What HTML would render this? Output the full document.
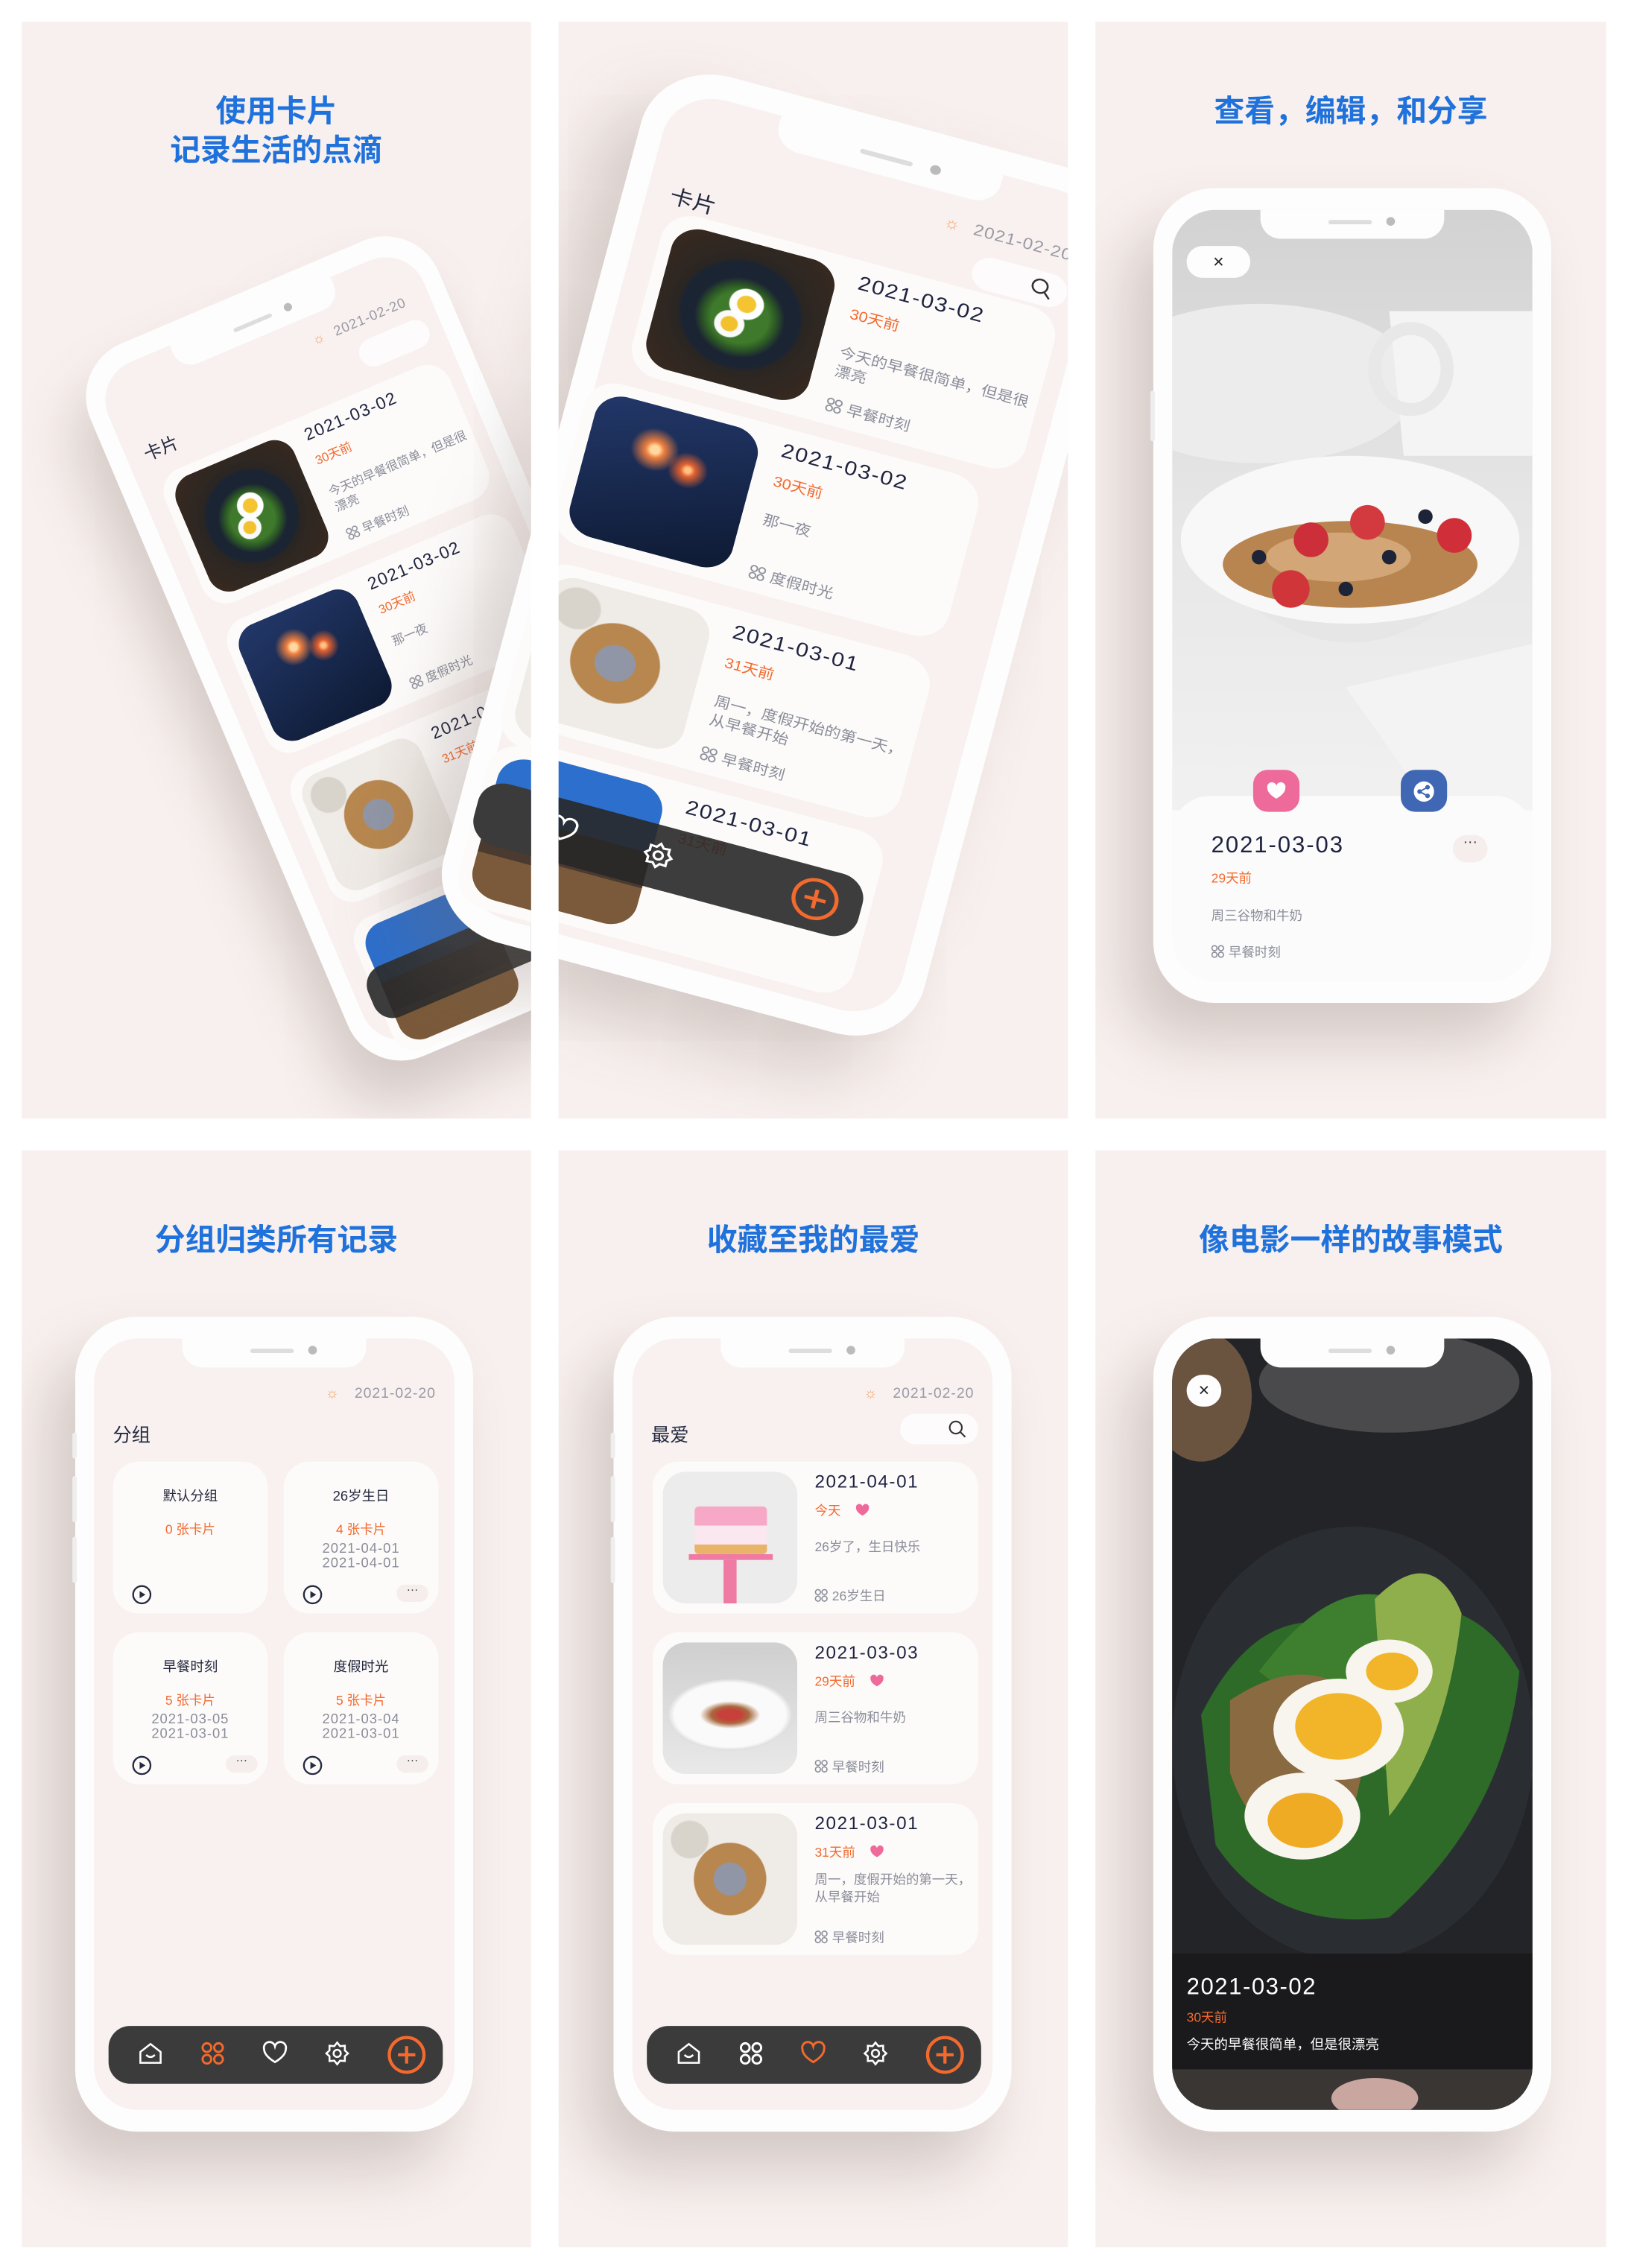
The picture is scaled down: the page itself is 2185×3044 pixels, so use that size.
<!DOCTYPE html>
<html><head><meta charset="utf-8">
<style>
*{margin:0;padding:0;box-sizing:border-box}
html,body{width:2185px;height:3044px;background:#fff;overflow:hidden}
body{font-family:"Liberation Sans","Noto Sans CJK SC",sans-serif}
#root{position:absolute;left:0;top:0;width:1125px;height:1567px;transform:scale(1.9422);transform-origin:0 0}
.panel{position:absolute;background:#f8f0ee;overflow:hidden;width:352px;height:758px}
.title{position:absolute;left:0;width:100%;text-align:center;color:#1f72dc;font-weight:bold;font-size:21px;line-height:27px;font-family:"Noto Sans CJK SC",sans-serif}
.phone{position:absolute;width:275px;height:563px;background:#fdfdfd;border-radius:42px;box-shadow:-18px 26px 40px rgba(120,100,95,.28)}
.scr{position:absolute;left:13px;top:15px;width:249px;height:533px;border-radius:30px;background:#f8f1ef;overflow:hidden}
.notch{position:absolute;left:74px;top:15px;width:127px;height:20px;background:#fdfdfd;border-radius:0 0 14px 14px;z-index:5}
.notch:before{content:"";position:absolute;left:47px;top:7px;width:30px;height:3px;border-radius:2px;background:#ddd}
.notch:after{content:"";position:absolute;left:87px;top:5px;width:6px;height:6px;border-radius:50%;background:#bbb}
.sbtn{position:absolute;left:-2px;width:3px;background:#eee;border-radius:2px}
.abs{position:absolute;white-space:nowrap}
.date{font-size:10px;color:#9a9aa6;letter-spacing:.5px}
.ttl{font-size:13px;color:#252a40}
.search{position:absolute;width:54px;height:21px;border-radius:11px;background:#fdfbfb}
.card{position:absolute;left:27px;width:225px;height:105px;border-radius:18px;background:#fdfbfa}
.cimg{position:absolute;left:7px;top:7px;width:93px;height:91px;border-radius:16px;overflow:hidden}
.cd{position:absolute;left:112px;top:7px;font-size:12.5px;color:#1e2340;letter-spacing:.8px}
.cs{position:absolute;left:112px;top:27px;font-size:9px;color:#f26a2e}
.cx{position:absolute;left:112px;top:53px;font-size:9px;color:#8a8d99;line-height:12px;width:108px;white-space:normal}
.ct{position:absolute;left:112px;top:86px;font-size:9px;color:#8a8d99}
.g{display:inline-block;width:9px;height:9px;margin-right:3px;vertical-align:-1px;background:radial-gradient(circle,transparent 1.3px,#8a8d99 1.4px 2.1px,transparent 2.2px) 0 0/4.5px 4.5px}
.hr{display:inline-block;width:10px;height:9px;margin-left:10px;vertical-align:-1px}
.nav{position:absolute;left:23px;top:490px;width:231px;height:40px;border-radius:15px;background:#3b3b3b}
.nav svg{position:absolute;top:10px}
.gcard{position:absolute;width:107px;height:105px;border-radius:18px;background:#fdfbfa;text-align:center}
.gcard .n{position:absolute;left:0;width:100%;top:16px;font-size:9.5px;color:#252a40}
.gcard .c{position:absolute;left:0;width:100%;top:40px;font-size:9px;color:#f26a2e}
.gcard .d{position:absolute;left:0;width:100%;top:56px;font-size:9.5px;color:#8a8d99;line-height:10px;letter-spacing:.5px}
.gcard .p{position:absolute;left:13px;top:85px}
.gcard .m{position:absolute;left:78px;top:85px;width:22px;height:12px;border-radius:6px;background:#f6eeec;font-size:8px;line-height:7px;color:#333}
.img-plate{background:radial-gradient(circle at 52% 42%,#f5c531 0 7%,#fff 8% 13%,transparent 14%),radial-gradient(circle at 45% 58%,#f2c12e 0 6%,#fafafa 7% 11%,transparent 12%),radial-gradient(circle at 50% 52%,#3f7a2c 0 24%,#2d5a25 30%,transparent 38%),radial-gradient(circle at 50% 50%,#1b2433 0 50%,#2b2622 55%,#3a2a20 100%)}
.img-spark{background:radial-gradient(circle at 40% 30%,#ffd8a0 0 3%,#f08040 6%,transparent 16%),radial-gradient(circle at 62% 38%,#ffc080 0 2%,#e06030 5%,transparent 14%),linear-gradient(160deg,#23386a,#0e1a33)}
.img-table{background:radial-gradient(circle at 50% 50%,#9096a6 0 17%,#b8874f 18% 38%,transparent 39%),radial-gradient(circle at 20% 20%,#d8d4cc 0 12%,transparent 13%),#efebe6}
.img-blue{background:linear-gradient(#2d6fcc 0 45%,#4a3a30 45% 70%,#7a5a3a 70%)}
.img-bowl{background:radial-gradient(ellipse 28% 13% at 50% 55%,#c8403a 0 30%,#a86a40 50%,transparent 80%),radial-gradient(ellipse 46% 27% at 50% 55%,#fafafa 0 90%,#ddd 100%,transparent 101%),linear-gradient(#cfcfcf,#e9e9e9)}
.img-cake{background:#ececec}
</style></head><body><div id="root">

<!-- ================= PANEL 1 ================= -->
<div class="panel" style="left:15px;top:15px">
  <div class="title" style="top:48px">使用卡片<br>记录生活的点滴</div>
  <div class="phone" style="left:32px;top:238px;transform:rotate(-23deg) scale(.95);transform-origin:0 0">
    <div class="scr">
      <div class="abs" style="left:158px;top:33px;color:#f4a36a;font-size:10px">☼</div>
      <div class="abs date" style="left:175px;top:33px">2021-02-20</div>
      <div class="abs ttl" style="left:13px;top:56px">卡片</div>
      <div class="search" style="left:185px;top:52px"></div>
    </div>
    <div class="notch"></div>
    <div class="card" style="top:100px"><div class="cimg img-plate"></div><div class="cd">2021-03-02</div><div class="cs">30天前</div><div class="cx">今天的早餐很简单，但是很漂亮</div><div class="ct"><span class="g"></span>早餐时刻</div></div>
    <div class="card" style="top:218px"><div class="cimg img-spark"></div><div class="cd">2021-03-02</div><div class="cs">30天前</div><div class="cx">那一夜</div><div class="ct"><span class="g"></span>度假时光</div></div>
    <div class="card" style="top:336px"><div class="cimg img-table"></div><div class="cd">2021-03-01</div><div class="cs">31天前</div></div>
    <div class="card" style="top:454px"><div class="cimg img-blue"></div></div>
    <div class="nav" style="top:490px;background:rgba(45,45,45,.92)"></div>
  </div>
  <div class="phone" style="left:440px;top:25px;transform:rotate(15deg) scale(1.25,1.1);transform-origin:0 0">
    <div class="scr"></div>
    <div class="card" style="top:336px;left:10px"><div class="cimg img-table"></div></div>
    <div class="card" style="top:440px;left:10px"><div class="cimg img-blue"></div></div>
    <div class="nav" style="top:465px;left:10px"></div>
  </div>
</div>

<!-- ================= PANEL 2 ================= -->
<div class="panel" style="left:386px;top:15px">
  <div class="phone" style="left:69px;top:25px;transform:rotate(15deg) scale(1.25,1.1);transform-origin:0 0">
    <div class="scr">
      <div class="abs" style="left:163px;top:33px;color:#f4a36a;font-size:10px">☼</div>
      <div class="abs date" style="left:180px;top:33px">2021-02-20</div>
      <div class="abs ttl" style="left:13px;top:56px">卡片</div>
      <div class="search" style="left:185px;top:52px"><svg style="position:absolute;left:33px;top:4px" width="13" height="13" viewBox="0 0 13 13"><circle cx="5.5" cy="5.5" r="4.2" fill="none" stroke="#333" stroke-width="1.1"/><path d="M8.5 8.5L12 12" stroke="#333" stroke-width="1.1"/></svg></div>
    </div>
    <div class="notch"></div>
    <div class="card" style="top:90px"><div class="cimg img-plate"></div><div class="cd">2021-03-02</div><div class="cs">30天前</div><div class="cx">今天的早餐很简单，但是很漂亮</div><div class="ct"><span class="g"></span>早餐时刻</div></div>
    <div class="card" style="top:204px;left:10px"><div class="cimg img-spark"></div><div class="cd">2021-03-02</div><div class="cs">30天前</div><div class="cx">那一夜</div><div class="ct"><span class="g"></span>度假时光</div></div>
    <div class="card" style="top:322px;left:10px"><div class="cimg img-table"></div><div class="cd">2021-03-01</div><div class="cs">31天前</div><div class="cx">周一，度假开始的第一天，从早餐开始</div><div class="ct"><span class="g"></span>早餐时刻</div></div>
    <div class="card" style="top:436px;left:10px"><div class="cimg img-blue"></div><div class="cd">2021-03-01</div><div class="cs">31天前</div></div>
    <div class="nav" style="top:465px;left:10px;width:220px;background:rgba(40,40,40,.9)">
      <svg style="left:40px" width="18" height="18" viewBox="0 0 18 18" fill="none" stroke="#fff" stroke-width="1.4"><path d="M9 15C4 12 1.5 9 1.5 6A3.7 3.7 0 0 1 9 4A3.7 3.7 0 0 1 16.5 6C16.5 9 14 12 9 15Z"/></svg>
      <svg style="left:95px" width="18" height="18" viewBox="0 0 18 18" fill="none" stroke="#fff" stroke-width="1.4"><circle cx="9" cy="9" r="2.5"/><path d="M9 1.5L11 4L14.3 3.7L14.3 7L16.5 9L14.3 11L14.3 14.3L11 14L9 16.5L7 14L3.7 14.3L3.7 11L1.5 9L3.7 7L3.7 3.7L7 4Z"/></svg>
      <svg style="left:180px;top:6px" width="28" height="28" viewBox="0 0 28 28" fill="none" stroke="#f26a2e" stroke-width="2.2"><circle cx="14" cy="14" r="12"/><path d="M14 8V20M8 14H20"/></svg>
    </div>
  </div>
</div>

<!-- ================= PANEL 3 ================= -->
<div class="panel" style="left:757px;top:15px;width:353px">
  <div class="title" style="top:48px">查看，编辑，和分享</div>
  <div class="phone" style="left:40px;top:115px">
    <div class="sbtn" style="top:140px;height:35px"></div>
    <div class="scr" style="background:#fcfbfb">
      <svg width="249" height="415" viewBox="0 0 249 415" style="position:absolute;left:0;top:0">
        <defs><linearGradient id="bg3" x1="0" y1="0" x2="0" y2="1"><stop offset="0" stop-color="#d2d2d2"/><stop offset=".5" stop-color="#e6e6e6"/><stop offset="1" stop-color="#f1f1f1"/></linearGradient></defs>
        <rect width="249" height="415" fill="url(#bg3)"/>
        <ellipse cx="60" cy="120" rx="110" ry="55" fill="#ececec"/>
        <path d="M150 70H249V170H160Z" fill="#f4f4f4"/>
        <ellipse cx="165" cy="110" rx="25" ry="28" fill="none" stroke="#e8e8e8" stroke-width="9"/>
        <path d="M120 330L249 300V415H180Z" fill="#f3f3f3"/>
        <path d="M8 228Q123 370 238 228" fill="#e6e6e6"/>
        <ellipse cx="123" cy="228" rx="117" ry="58" fill="#f8f8f8"/>
        <ellipse cx="123" cy="245" rx="88" ry="30" fill="#b88550"/>
        <ellipse cx="115" cy="240" rx="50" ry="17" fill="#d2a676"/>
        <circle cx="82" cy="262" r="13" fill="#d0353a"/><circle cx="96" cy="228" r="12" fill="#cc2f3a"/>
        <circle cx="135" cy="216" r="12" fill="#d23a40"/><circle cx="195" cy="225" r="12" fill="#d02f3a"/>
        <circle cx="60" cy="240" r="5" fill="#1e2438"/><circle cx="150" cy="240" r="5" fill="#1e2438"/><circle cx="120" cy="262" r="5" fill="#1e2438"/><circle cx="175" cy="212" r="5" fill="#1e2438"/>
      </svg>
      <div class="abs" style="left:10px;top:25px;width:44px;height:22px;border-radius:11px;background:#fdfdfd;text-align:center;font-size:13px;line-height:21px;color:#222">×</div>
      <div style="position:absolute;left:0;top:405px;width:249px;height:128px;border-radius:26px 26px 0 0;background:#fcfbfb"></div>
      <div class="abs" style="left:56px;top:387px;width:32px;height:29px;border-radius:10px;background:#ee6a9a"><svg style="position:absolute;left:9px;top:8px" width="14" height="13" viewBox="0 0 18 16"><path d="M9 15C4 12 1 9 1 5.5A4 4 0 0 1 9 3.5A4 4 0 0 1 17 5.5C17 9 14 12 9 15Z" fill="#fff"/></svg></div>
      <div class="abs" style="left:158px;top:387px;width:32px;height:29px;border-radius:10px;background:#3f67b3"><svg style="position:absolute;left:8px;top:7px" width="16" height="16" viewBox="0 0 16 16"><circle cx="8" cy="8" r="7" fill="#fff"/><circle cx="5" cy="8" r="1.6" fill="#3f67b3"/><circle cx="10.5" cy="5" r="1.6" fill="#3f67b3"/><circle cx="10.5" cy="11" r="1.6" fill="#3f67b3"/><path d="M5 8L10.5 5M5 8L10.5 11" stroke="#3f67b3" stroke-width="1"/></svg></div>
      <div class="abs" style="left:27px;top:431px;font-size:16px;color:#1e2340;letter-spacing:1px">2021-03-03</div>
      <div class="abs" style="left:27px;top:455px;font-size:9px;color:#f26a2e">29天前</div>
      <div class="abs" style="left:27px;top:481px;font-size:9px;color:#8a8d99">周三谷物和牛奶</div>
      <div class="abs" style="left:27px;top:506px;font-size:9px;color:#8a8d99"><span class="g"></span>早餐时刻</div>
      <div class="abs" style="left:194px;top:432px;width:24px;height:19px;border-radius:10px;background:#f6eeec;text-align:center;font-size:10px;line-height:12px;color:#333">···</div>
    </div>
    <div class="notch"></div>
  </div>
</div>

<!-- ================= PANEL 4 ================= -->
<div class="panel" style="left:15px;top:795px">
  <div class="title" style="top:48px">分组归类所有记录</div>
  <div class="phone" style="left:37px;top:115px">
    <div class="sbtn" style="top:80px;height:18px"></div><div class="sbtn" style="top:110px;height:32px"></div><div class="sbtn" style="top:152px;height:32px"></div>
    <div class="scr">
      <div class="abs" style="left:160px;top:33px;color:#f4a36a;font-size:10px">☼</div>
      <div class="abs date" style="left:180px;top:33px">2021-02-20</div>
      <div class="abs ttl" style="left:13px;top:56px">分组</div>
    </div>
    <div class="notch"></div>
    <div class="gcard" style="left:26px;top:100px"><div class="n">默认分组</div><div class="c">0 张卡片</div><div class="p"><svg width="14" height="14" viewBox="0 0 14 14"><circle cx="7" cy="7" r="6" fill="none" stroke="#252a40" stroke-width="1.2"/><path d="M5.5 4.5L9.5 7L5.5 9.5Z" fill="#252a40"/></svg></div></div>
    <div class="gcard" style="left:144px;top:100px"><div class="n">26岁生日</div><div class="c">4 张卡片</div><div class="d">2021-04-01<br>2021-04-01</div><div class="p"><svg width="14" height="14" viewBox="0 0 14 14"><circle cx="7" cy="7" r="6" fill="none" stroke="#252a40" stroke-width="1.2"/><path d="M5.5 4.5L9.5 7L5.5 9.5Z" fill="#252a40"/></svg></div><div class="m">···</div></div>
    <div class="gcard" style="left:26px;top:218px"><div class="n">早餐时刻</div><div class="c">5 张卡片</div><div class="d">2021-03-05<br>2021-03-01</div><div class="p"><svg width="14" height="14" viewBox="0 0 14 14"><circle cx="7" cy="7" r="6" fill="none" stroke="#252a40" stroke-width="1.2"/><path d="M5.5 4.5L9.5 7L5.5 9.5Z" fill="#252a40"/></svg></div><div class="m">···</div></div>
    <div class="gcard" style="left:144px;top:218px"><div class="n">度假时光</div><div class="c">5 张卡片</div><div class="d">2021-03-04<br>2021-03-01</div><div class="p"><svg width="14" height="14" viewBox="0 0 14 14"><circle cx="7" cy="7" r="6" fill="none" stroke="#252a40" stroke-width="1.2"/><path d="M5.5 4.5L9.5 7L5.5 9.5Z" fill="#252a40"/></svg></div><div class="m">···</div></div>
    <div class="nav">
      <svg style="left:20px" width="18" height="18" viewBox="0 0 18 18" fill="none" stroke="#fff" stroke-width="1.3"><path d="M2 8L9 2.5L16 8V15.5H2Z"/><path d="M6 10Q9 13 12 10"/></svg>
      <svg style="left:63px" width="18" height="18" viewBox="0 0 18 18" fill="none" stroke="#f26a2e" stroke-width="1.5"><circle cx="5" cy="5" r="3"/><circle cx="13" cy="5" r="3"/><circle cx="5" cy="13" r="3"/><circle cx="13" cy="13" r="3"/></svg>
      <svg style="left:106px" width="18" height="18" viewBox="0 0 18 18" fill="none" stroke="#fff" stroke-width="1.4"><path d="M9 15C4 12 1.5 9 1.5 6A3.7 3.7 0 0 1 9 4A3.7 3.7 0 0 1 16.5 6C16.5 9 14 12 9 15Z"/></svg>
      <svg style="left:149px" width="18" height="18" viewBox="0 0 18 18" fill="none" stroke="#fff" stroke-width="1.3"><circle cx="9" cy="9" r="2.5"/><path d="M9 1.5L11 4L14.3 3.7L14.3 7L16.5 9L14.3 11L14.3 14.3L11 14L9 16.5L7 14L3.7 14.3L3.7 11L1.5 9L3.7 7L3.7 3.7L7 4Z"/></svg>
      <svg style="left:192px;top:6px" width="28" height="28" viewBox="0 0 28 28" fill="none" stroke="#f26a2e" stroke-width="2.2"><circle cx="14" cy="14" r="12"/><path d="M14 8V20M8 14H20"/></svg>
    </div>
  </div>
</div>

<!-- ================= PANEL 5 ================= -->
<div class="panel" style="left:386px;top:795px">
  <div class="title" style="top:48px">收藏至我的最爱</div>
  <div class="phone" style="left:38px;top:115px">
    <div class="sbtn" style="top:80px;height:18px"></div><div class="sbtn" style="top:110px;height:32px"></div><div class="sbtn" style="top:152px;height:32px"></div>
    <div class="scr">
      <div class="abs" style="left:160px;top:33px;color:#f4a36a;font-size:10px">☼</div>
      <div class="abs date" style="left:180px;top:33px">2021-02-20</div>
      <div class="abs ttl" style="left:13px;top:56px">最爱</div>
      <div class="search" style="left:185px;top:52px"><svg style="position:absolute;left:33px;top:4px" width="13" height="13" viewBox="0 0 13 13"><circle cx="5.5" cy="5.5" r="4.2" fill="none" stroke="#333" stroke-width="1.1"/><path d="M8.5 8.5L12 12" stroke="#333" stroke-width="1.1"/></svg></div>
    </div>
    <div class="notch"></div>
    <div class="card" style="top:100px"><div class="cimg img-cake"><div style="position:absolute;left:22px;top:24px;width:50px;height:33px;background:linear-gradient(#f6a8c6 0 40%,#fbe7ef 40% 80%,#e9b36a 80%);border-radius:3px"></div><div style="position:absolute;left:18px;top:57px;width:58px;height:4px;background:#ef7aa3"></div><div style="position:absolute;left:42px;top:61px;width:9px;height:30px;background:#ef7aa3"></div></div><div class="cd">2021-04-01</div><div class="cs">今天<svg class="hr" viewBox="0 0 18 16"><path d="M9 15C4 12 1 9 1 5.5A4 4 0 0 1 9 3.5A4 4 0 0 1 17 5.5C17 9 14 12 9 15Z" fill="#ee6a9a"/></svg></div><div class="cx">26岁了，生日快乐</div><div class="ct"><span class="g"></span>26岁生日</div></div>
    <div class="card" style="top:218px"><div class="cimg img-bowl"></div><div class="cd">2021-03-03</div><div class="cs">29天前<svg class="hr" viewBox="0 0 18 16"><path d="M9 15C4 12 1 9 1 5.5A4 4 0 0 1 9 3.5A4 4 0 0 1 17 5.5C17 9 14 12 9 15Z" fill="#ee6a9a"/></svg></div><div class="cx">周三谷物和牛奶</div><div class="ct"><span class="g"></span>早餐时刻</div></div>
    <div class="card" style="top:336px"><div class="cimg img-table"></div><div class="cd">2021-03-01</div><div class="cs">31天前<svg class="hr" viewBox="0 0 18 16"><path d="M9 15C4 12 1 9 1 5.5A4 4 0 0 1 9 3.5A4 4 0 0 1 17 5.5C17 9 14 12 9 15Z" fill="#ee6a9a"/></svg></div><div class="cx" style="top:47px">周一，度假开始的第一天，从早餐开始</div><div class="ct"><span class="g"></span>早餐时刻</div></div>
    <div class="nav">
      <svg style="left:20px" width="18" height="18" viewBox="0 0 18 18" fill="none" stroke="#fff" stroke-width="1.3"><path d="M2 8L9 2.5L16 8V15.5H2Z"/><path d="M6 10Q9 13 12 10"/></svg>
      <svg style="left:63px" width="18" height="18" viewBox="0 0 18 18" fill="none" stroke="#fff" stroke-width="1.5"><circle cx="5" cy="5" r="3"/><circle cx="13" cy="5" r="3"/><circle cx="5" cy="13" r="3"/><circle cx="13" cy="13" r="3"/></svg>
      <svg style="left:106px" width="18" height="18" viewBox="0 0 18 18" fill="none" stroke="#f26a2e" stroke-width="1.5"><path d="M9 15C4 12 1.5 9 1.5 6A3.7 3.7 0 0 1 9 4A3.7 3.7 0 0 1 16.5 6C16.5 9 14 12 9 15Z"/></svg>
      <svg style="left:149px" width="18" height="18" viewBox="0 0 18 18" fill="none" stroke="#fff" stroke-width="1.3"><circle cx="9" cy="9" r="2.5"/><path d="M9 1.5L11 4L14.3 3.7L14.3 7L16.5 9L14.3 11L14.3 14.3L11 14L9 16.5L7 14L3.7 14.3L3.7 11L1.5 9L3.7 7L3.7 3.7L7 4Z"/></svg>
      <svg style="left:192px;top:6px" width="28" height="28" viewBox="0 0 28 28" fill="none" stroke="#f26a2e" stroke-width="2.2"><circle cx="14" cy="14" r="12"/><path d="M14 8V20M8 14H20"/></svg>
    </div>
  </div>
</div>

<!-- ================= PANEL 6 ================= -->
<div class="panel" style="left:757px;top:795px;width:353px">
  <div class="title" style="top:48px">像电影一样的故事模式</div>
  <div class="phone" style="left:40px;top:115px">
    <div class="scr" style="background:#1e1f22">
      <svg width="249" height="533" viewBox="0 0 249 533" style="position:absolute;left:0;top:0">
        <rect width="249" height="533" fill="#232427"/>
        <ellipse cx="20" cy="40" rx="35" ry="45" fill="#6a5440"/>
        <ellipse cx="150" cy="30" rx="90" ry="35" fill="#4a4a4c"/>
        <ellipse cx="125" cy="280" rx="125" ry="150" fill="#2a2e33"/>
        <path d="M20 260Q60 180 120 200Q200 160 240 230Q230 330 150 400Q70 410 30 350Z" fill="#2e6a28"/>
        <path d="M60 230Q120 150 170 190L150 300Z" fill="#3d7f2e"/>
        <path d="M140 180Q180 140 200 190Q190 280 150 330Z" fill="#8fae4c"/>
        <path d="M40 250Q100 210 140 260L120 350Q60 360 40 300Z" fill="#8a6a40"/>
        <ellipse cx="115" cy="270" rx="45" ry="35" fill="#f7f5ee"/>
        <ellipse cx="115" cy="268" rx="30" ry="23" fill="#f2b52a"/>
        <ellipse cx="90" cy="330" rx="40" ry="30" fill="#f7f5ee"/>
        <ellipse cx="92" cy="333" rx="26" ry="19" fill="#f0ab25"/>
        <ellipse cx="150" cy="230" rx="30" ry="22" fill="#f7f5ee"/>
        <ellipse cx="152" cy="230" rx="18" ry="13" fill="#f2b52a"/>
        <rect x="0" y="425" width="249" height="85" fill="#1a1a1c"/>
        <rect x="0" y="505" width="249" height="28" fill="#3a3634"/>
        <ellipse cx="140" cy="525" rx="30" ry="14" fill="#c9a6a0"/>
      </svg>
      <div class="abs" style="left:10px;top:25px;width:24px;height:22px;border-radius:11px;background:#fdfdfd;text-align:center;font-size:13px;line-height:21px;color:#222">×</div>
      <div class="abs" style="left:10px;top:440px;font-size:16px;color:#fff;letter-spacing:.8px">2021-03-02</div>
      <div class="abs" style="left:10px;top:462px;font-size:9px;color:#f26a2e">30天前</div>
      <div class="abs" style="left:10px;top:480px;font-size:9.5px;color:#fff">今天的早餐很简单，但是很漂亮</div>
    </div>
    <div class="notch"></div>
  </div>
</div>

</div></body></html>
